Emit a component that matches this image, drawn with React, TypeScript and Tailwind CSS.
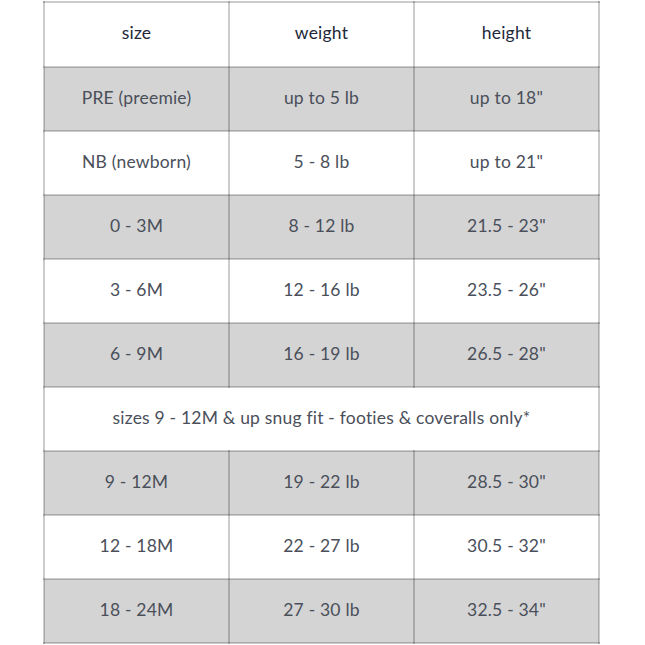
const rows: [string, string, string][] = [
  ["PRE (preemie)", "up to 5 lb", "up to 18\""],
  ["NB (newborn)", "5 - 8 lb", "up to 21\""],
  ["0 - 3M", "8 - 12 lb", "21.5 - 23\""],
  ["3 - 6M", "12 - 16 lb", "23.5 - 26\""],
  ["6 - 9M", "16 - 19 lb", "26.5 - 28\""],
];

const rowsAfter: [string, string, string][] = [
  ["9 - 12M", "19 - 22 lb", "28.5 - 30\""],
  ["12 - 18M", "22 - 27 lb", "30.5 - 32\""],
  ["18 - 24M", "27 - 30 lb", "32.5 - 34\""],
];

function Row({ cells, gray }: { cells: [string, string, string]; gray: boolean }) {
  return (
    <tr className={gray ? "bg-[#d4d4d4]" : "bg-white"}>
      {cells.map((c, i) => (
        <td key={i} className="h-[64px] border-2 border-black/20 pb-[2px] text-center align-middle">
          {c}
        </td>
      ))}
    </tr>
  );
}

export default function App() {
  return (
    <div className="h-[645px] w-[645px] overflow-hidden bg-white pt-px font-['Lato','Open_Sans',sans-serif] text-[17.5px] tracking-[0.2px] text-[#4a4f5a]">
      <table className="ml-[43px] w-[557px] table-fixed border-collapse">
        <thead>
          <tr className="bg-white">
            <th className="h-[65px] border-2 border-black/20 pb-[2px] text-center font-normal text-[#22283a]">size</th>
            <th className="border-2 border-black/20 pb-[2px] text-center font-normal text-[#22283a]">weight</th>
            <th className="border-2 border-black/20 pb-[2px] text-center font-normal text-[#22283a]">height</th>
          </tr>
        </thead>
        <tbody>
          {rows.map((r, i) => (
            <Row key={r[0]} cells={r} gray={i % 2 === 0} />
          ))}
          <tr className="bg-white">
            <td colSpan={3} className="h-[64px] border-2 border-black/20 pb-[2px] text-center">
              sizes 9 - 12M &amp; up snug fit - footies &amp; coveralls only*
            </td>
          </tr>
          {rowsAfter.map((r, i) => (
            <Row key={r[0]} cells={r} gray={i % 2 === 0} />
          ))}
        </tbody>
      </table>
    </div>
  );
}
